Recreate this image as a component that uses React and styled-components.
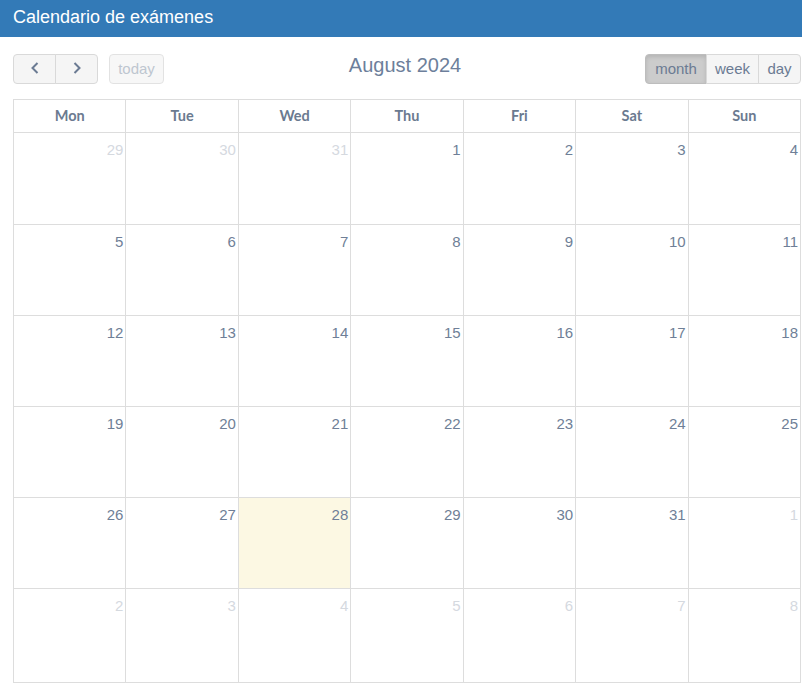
import React from 'react'
import styled, { createGlobalStyle } from 'styled-components'

const Global = createGlobalStyle`
  html, body { margin: 0; padding: 0; background: #fff; }
  body { font-family: "Liberation Sans", Arial, sans-serif; }
`

const Page = styled.div`
  width: 802px;
`

const TopBar = styled.div`
  height: 37px;
  background: #337ab7;
  color: #fff;
  font-size: 18px;
  display: flex;
  align-items: center;
  padding: 0 13px 3px;
  box-sizing: border-box;
`

const Calendar = styled.div`
  padding: 17px 1px 0 13px;
`

const Toolbar = styled.div`
  display: grid;
  grid-template-columns: 1fr auto 1fr;
  align-items: center;
  height: 30px;
  margin-bottom: 15px;
`

const Left = styled.div`
  display: flex;
  gap: 11px;
`

const Right = styled.div`
  display: flex;
  justify-content: flex-end;
`

const Group = styled.div`
  display: flex;
  & > button { border-radius: 0; }
  & > button + button { margin-left: -1px; }
  & > button:first-child { border-radius: 4px 0 0 4px; }
  & > button:last-child { border-radius: 0 4px 4px 0; }
`

const Btn = styled.button`
  height: 30px;
  box-sizing: border-box;
  padding: 0;
  width: ${p => p.$w}px;
  border: 1px solid ${p => (p.$active ? '#bdbdbd' : '#d9d9d9')};
  border-radius: 4px;
  background: ${p => (p.$active ? '#cccccc' : '#f5f5f5')};
  box-shadow: ${p => (p.$active ? 'inset 0 2px 4px rgba(0,0,0,0.12)' : 'none')};
  color: ${p => (p.$disabled ? '#a9b3c1' : '#6b7b93')};
  opacity: ${p => (p.$disabled ? 0.75 : 1)};
  font-family: "Liberation Sans", Arial, sans-serif;
  font-size: 15px;
  display: flex;
  align-items: center;
  justify-content: center;
  padding-bottom: 2px;
  cursor: pointer;
`

const Title = styled.h2`
  margin: 0;
  font-weight: normal;
  font-size: 20px;
  color: #6d7f9b;
  position: relative;
  top: -4px;
  left: -2px;
`

const Grid = styled.div`
  display: grid;
  grid-template-columns: repeat(7, 1fr);
  border-left: 1px solid #ddd;
  border-top: 1px solid #ddd;
`

const HeadCell = styled.div`
  height: 33px;
  border-right: 1px solid #ddd;
  border-bottom: 1px solid #ddd;
  display: flex;
  align-items: center;
  justify-content: center;
  padding-bottom: 1px;
  box-sizing: border-box;
  font-family: Lato, "Noto Sans", sans-serif;
  font-weight: bold;
  font-size: 14.5px;
  color: #6b7a90;
`

const DayCell = styled.div`
  height: ${p => p.$h}px;
  border-right: 1px solid #ddd;
  border-bottom: 1px solid #ddd;
  background: ${p => (p.$today ? '#fcf8e3' : '#fff')};
  text-align: right;
  padding: 8px 2px 0 0;
  box-sizing: border-box;
  font-size: 15px;
  color: ${p => (p.$other ? '#d5d9df' : '#6f7f97')};
`

const Chevron = ({ dir }) => (
  <svg width="16" height="16" viewBox="0 0 16 16" fill="none" stroke="#6b7b93" strokeWidth="2">
    {dir === 'left' ? <path d="M10.5 3 L5.5 8 L10.5 13" /> : <path d="M5.5 3 L10.5 8 L5.5 13" />}
  </svg>
)

const days = ['Mon', 'Tue', 'Wed', 'Thu', 'Fri', 'Sat', 'Sun']

const weeks = (() => {
  const out = []
  const cells = []
  ;[29, 30, 31].forEach(d => cells.push({ d, other: true }))
  for (let i = 1; i <= 31; i++) cells.push({ d: i, other: false, today: i === 28 })
  for (let i = 1; cells.length < 42; i++) cells.push({ d: i, other: true })
  for (let w = 0; w < 6; w++) out.push(cells.slice(w * 7, w * 7 + 7))
  return out
})()

const rowHeights = [92, 91, 91, 91, 91, 94]

export default function App() {
  return (
    <Page>
      <Global />
      <TopBar>Calendario de exámenes</TopBar>
      <Calendar>
        <Toolbar>
          <Left>
            <Group>
              <Btn $w={43} aria-label="prev"><Chevron dir="left" /></Btn>
              <Btn $w={43} aria-label="next"><Chevron dir="right" /></Btn>
            </Group>
            <Btn $disabled $w={55}>today</Btn>
          </Left>
          <Title>August 2024</Title>
          <Right>
            <Group>
              <Btn $active $w={62}>month</Btn>
              <Btn $w={53}>week</Btn>
              <Btn $w={43}>day</Btn>
            </Group>
          </Right>
        </Toolbar>
        <Grid>
          {days.map(d => <HeadCell key={d}>{d}</HeadCell>)}
          {weeks.map((w, wi) =>
            w.map((c, ci) => (
              <DayCell key={wi + '-' + ci} $h={rowHeights[wi]} $other={c.other} $today={c.today}>
                {c.d}
              </DayCell>
            ))
          )}
        </Grid>
      </Calendar>
    </Page>
  )
}
